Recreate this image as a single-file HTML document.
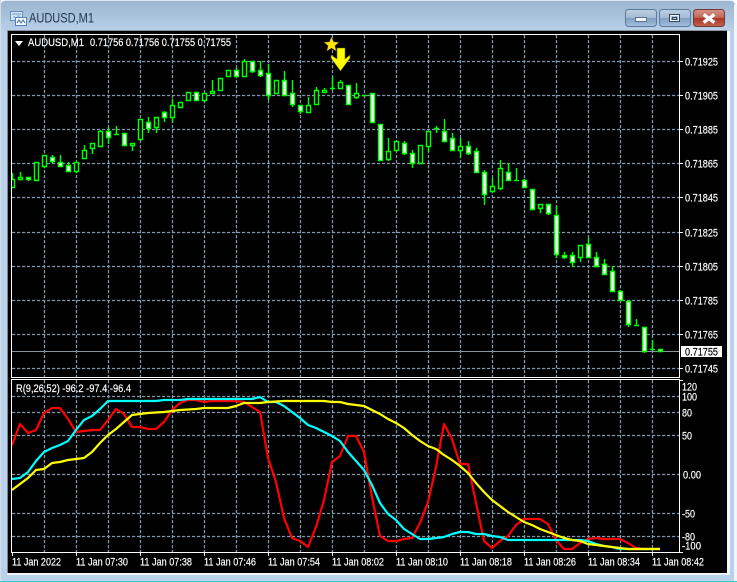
<!DOCTYPE html>
<html><head><meta charset="utf-8"><title>AUDUSD,M1</title>
<style>
html,body{margin:0;padding:0;background:#fff;width:737px;height:582px;overflow:hidden}
svg{display:block}
text{font-family:"Liberation Sans",sans-serif;font-size:11px;fill:#fff;stroke:#fff;stroke-width:.18}
.c{shape-rendering:crispEdges}
</style></head><body>
<svg width="737" height="582" viewBox="0 0 737 582" xmlns="http://www.w3.org/2000/svg">
<defs>
<linearGradient id="tb" x1="0" y1="0" x2="0" y2="1"><stop offset="0" stop-color="#9bb5d0"/><stop offset="1" stop-color="#b9d1e9"/></linearGradient>
<linearGradient id="bt" x1="0" y1="0" x2="0" y2="1"><stop offset="0" stop-color="#bccfe2"/><stop offset=".48" stop-color="#a3bcd6"/><stop offset=".52" stop-color="#7f9fc0"/><stop offset="1" stop-color="#a4c1dc"/></linearGradient>
<linearGradient id="cl" x1="0" y1="0" x2="0" y2="1"><stop offset="0" stop-color="#d4948a"/><stop offset=".48" stop-color="#c56455"/><stop offset=".52" stop-color="#a83526"/><stop offset="1" stop-color="#c4624e"/></linearGradient>
<clipPath id="mc"><rect x="12" y="35" width="667" height="342"/></clipPath>
<clipPath id="sc"><rect x="12" y="380" width="667" height="172"/></clipPath>
</defs>
<!-- window frame -->
<rect x="0.5" y="0.5" width="735" height="582" rx="5" fill="#b9d1ea"/>
<rect x="1" y="1" width="733" height="31" rx="4" fill="url(#tb)"/>
<rect x="0" y="0" width="1" height="582" fill="#d8dde3"/>
<rect x="734" y="5" width="3" height="577" fill="#f2f5f8"/>
<rect x="0" y="581" width="737" height="1" fill="#3fc6d2"/>
<rect x="7" y="30" width="720" height="1" fill="#8b949e"/>
<rect x="7" y="30" width="1" height="544" fill="#7d858e"/>
<rect x="727" y="31" width="3" height="544" fill="#f4f7fa"/>
<rect x="7" y="573" width="723" height="2" fill="#f0f2f4"/>
<rect x="8" y="31" width="719" height="542" fill="#000"/>
<!-- title icon -->
<g class="c">
<rect x="10.5" y="11.5" width="12" height="9" fill="#d7e6f5" stroke="#5f8dc0"/>
<path d="M12 14h9M13 17h2M17 16h3" stroke="#6f97c6" fill="none"/>
<rect x="15.5" y="17.5" width="11" height="8" fill="#f6fafe" stroke="#4d7fb8"/>
</g>
<path d="M17 23l2-3 2 3 2-3 2 3" stroke="#3567a8" fill="none"/>
<text x="29" y="22.5" style="font-size:14px;fill:#1f3350;stroke:none" textLength="65" lengthAdjust="spacingAndGlyphs">AUDUSD,M1</text>
<!-- buttons -->
<rect x="625.5" y="9.5" width="31" height="17" rx="3" fill="url(#bt)" stroke="#5c7a9c"/>
<rect x="659.5" y="9.5" width="31" height="17" rx="3" fill="url(#bt)" stroke="#5c7a9c"/>
<rect x="693.5" y="9.5" width="31" height="17" rx="3" fill="url(#cl)" stroke="#6f3a36"/>
<rect x="635.5" y="17.5" width="11" height="4" fill="#f2f5f8" stroke="#5a6f88" class="c"/>
<rect x="669.5" y="14.5" width="10" height="7" fill="none" stroke="#2f4560" class="c"/>
<rect x="670.5" y="15.5" width="8" height="5" fill="none" stroke="#eef3f8" class="c"/>
<rect x="672.5" y="17.5" width="4" height="2" fill="#b6c8da" stroke="#2f4560" class="c"/>
<path d="M705 15.5l8 6M713 15.5l-8 6" stroke="#fff" stroke-width="3.4" stroke-linecap="square" fill="none"/>
<!-- grids -->
<g stroke="#8496aa" stroke-width="1.25" stroke-dasharray="3.2 1.8" fill="none">
<path clip-path="url(#mc)" d="M44.5 35V377M76.5 35V377M108.5 35V377M140.5 35V377M172.5 35V377M204.5 35V377M236.5 35V377M268.5 35V377M300.5 35V377M332.5 35V377M364.5 35V377M396.5 35V377M428.5 35V377M460.5 35V377M492.5 35V377M524.5 35V377M556.5 35V377M588.5 35V377M620.5 35V377M652.5 35V377"/>
<path clip-path="url(#mc)" d="M12 61.5H679M12 95.5H679M12 129.5H679M12 163.5H679M12 197.5H679M12 232.5H679M12 266.5H679M12 300.5H679M12 334.5H679M12 368.5H679"/>
<path clip-path="url(#sc)" d="M44.5 380V552M76.5 380V552M108.5 380V552M140.5 380V552M172.5 380V552M204.5 380V552M236.5 380V552M268.5 380V552M300.5 380V552M332.5 380V552M364.5 380V552M396.5 380V552M428.5 380V552M460.5 380V552M492.5 380V552M524.5 380V552M556.5 380V552M588.5 380V552M620.5 380V552M652.5 380V552"/>
<path clip-path="url(#sc)" d="M12 396.5H679M12 412.5H679M12 435.5H679M12 474.5H679M12 513.5H679M12 536.5H679"/>
</g>
<!-- current price line -->
<rect x="12" y="351" width="667" height="1" fill="#8a949e" class="c"/>
<!-- candles -->
<g clip-path="url(#mc)" stroke-width="1.45">
<path stroke="#0f0" fill="none" d="M12.5 173V188M20.5 172V180M28.5 177V181M36.5 162V181M44.5 155V168M52.5 155V163M60.5 155V166M68.5 162V171M76.5 162V173M84.5 145V159M92.5 143V154M100.5 130V146M108.5 127V144M116.5 126V135M132.5 143V151M148.5 117V133M156.5 117V133M164.5 111V122M172.5 99V122M204.5 93V102M212.5 80V94M236.5 68V76M244.5 59V76M252.5 61V73M260.5 61V77M268.5 64V100M284.5 71V95M292.5 80V107M300.5 105V114M308.5 97V112M316.5 87V104M324.5 88V93M332.5 77V90M340.5 80V88M356.5 83V99M388.5 138V161M404.5 141V155M412.5 150V168M428.5 131V152M436.5 126V133M444.5 119V141M452.5 133V151M460.5 138V158M468.5 141V155M476.5 148V172M484.5 170V205M492.5 178V192M500.5 160V190M508.5 163V180M516.5 168V180M524.5 179V187M540.5 204V213M548.5 204V215M556.5 206V258M564.5 252V259M572.5 252V267M580.5 245V262M588.5 238V257M596.5 252V266M604.5 259V274M612.5 266V291M620.5 290V300M628.5 301V327M636.5 319V325M644.5 327V353M652.5 340V350M114 134.5h5M330 88.5h5M362 95.5h5M434 128.5h5M514 180.5h5M634 325.5h5M650 349.5h5"/>
<path stroke="#0f0" fill="#000" d="M10.5 179.5h4v8h-4zM18.5 177.5h4v2h-4zM34.5 162.5h4v18h-4zM42.5 155.5h4v11h-4zM74.5 162.5h4v9h-4zM82.5 150.5h4v8h-4zM90.5 143.5h4v5h-4zM98.5 131.5h4v15h-4zM130.5 143.5h4v2h-4zM138.5 119.5h4v20h-4zM154.5 117.5h4v10h-4zM170.5 105.5h4v12h-4zM178.5 102.5h4v5h-4zM186.5 92.5h4v8h-4zM202.5 93.5h4v7h-4zM210.5 91.5h4v2h-4zM218.5 78.5h4v12h-4zM226.5 70.5h4v6h-4zM242.5 61.5h4v15h-4zM274.5 80.5h4v13h-4zM306.5 105.5h4v7h-4zM314.5 90.5h4v14h-4zM322.5 90.5h4v2h-4zM338.5 82.5h4v6h-4zM354.5 93.5h4v4h-4zM386.5 151.5h4v8h-4zM394.5 141.5h4v9h-4zM418.5 145.5h4v18h-4zM426.5 131.5h4v15h-4zM458.5 146.5h4v4h-4zM490.5 186.5h4v5h-4zM498.5 168.5h4v20h-4zM538.5 204.5h4v4h-4zM578.5 245.5h4v12h-4z"/>
<path stroke="#0f0" fill="#fff" d="M26.5 177.5h4v2h-4zM50.5 157.5h4v4h-4zM58.5 162.5h4v4h-4zM66.5 165.5h4v6h-4zM106.5 131.5h4v6h-4zM122.5 133.5h4v12h-4zM146.5 122.5h4v6h-4zM162.5 112.5h4v5h-4zM194.5 92.5h4v8h-4zM234.5 70.5h4v6h-4zM250.5 61.5h4v10h-4zM258.5 70.5h4v5h-4zM266.5 73.5h4v22h-4zM282.5 80.5h4v15h-4zM290.5 93.5h4v11h-4zM298.5 105.5h4v6h-4zM346.5 85.5h4v19h-4zM370.5 93.5h4v29h-4zM378.5 124.5h4v36h-4zM402.5 143.5h4v10h-4zM410.5 153.5h4v10h-4zM442.5 131.5h4v10h-4zM450.5 138.5h4v12h-4zM466.5 146.5h4v7h-4zM474.5 151.5h4v21h-4zM482.5 172.5h4v22h-4zM506.5 172.5h4v8h-4zM522.5 180.5h4v7h-4zM530.5 189.5h4v20h-4zM546.5 204.5h4v9h-4zM554.5 215.5h4v39h-4zM562.5 255.5h4v2h-4zM570.5 255.5h4v7h-4zM586.5 244.5h4v13h-4zM594.5 257.5h4v9h-4zM602.5 264.5h4v10h-4zM610.5 271.5h4v20h-4zM618.5 291.5h4v9h-4zM626.5 301.5h4v23h-4zM642.5 327.5h4v24h-4zM658.5 349.5h4v2h-4z"/>
</g>
<!-- star and arrow -->
<path d="M331.5 37l2.1 4.9 5.4.4-4.1 3.4 1.3 5.3-4.7-2.9-4.7 2.9 1.3-5.3-4.1-3.4 5.4-.4z" fill="#ffe60a" stroke="#7a5a00" stroke-width=".5"/>
<path d="M337 48h8v11l5-4v3l-9.5 13-9.5-13v-3l6 4z" fill="#ffff00" stroke="#6b6b00" stroke-width=".6"/>
<!-- RSI lines -->
<g clip-path="url(#sc)" fill="none" stroke-width="2.2" stroke-linejoin="round">
<path stroke="#f00" d="M12 445L20 424 28 433 36 430 44 413 52 408 60 408 68 419 76 432 84 431 92 430 100 430 108 420 116 409 124 414 132 427 140 427 148 429 156 429 164 422 172 410 180 403 188 400 196 400 204 402 212 401 236 401 244 402 252 407 260 412 268 458 276 482 284 518 292 538 300 541 308 547 316 527 324 500 332 462 340 456 348 436 356 436 364 452 372 497 380 536 388 541 396 541 404 539 412 538 420 523 428 502 436 467 444 424 452 439 460 464 468 464 476 503 484 541 492 548 500 541 508 536 516 525 524 519 540 519 548 524 556 540 564 549 572 549 580 543 588 539 596 538 604 539 620 539 628 543 636 548 644 549 660 549"/>
<path stroke="#0ff" d="M12 479L20 478 28 472 36 461 44 452 52 448 60 445 68 441 76 430 84 420 92 416 100 409 108 401 156 401 164 400 180 400 188 399 252 399 260 397 268 402 276 402 284 406 292 412 300 418 308 425 316 428 324 432 332 436 340 441 348 452 356 461 364 470 372 485 380 503 388 514 396 520 404 529 412 534 420 539 428 539 436 538 444 537 452 534 460 532 468 532 476 534 484 534 492 536 500 537 508 540 580 540 588 541 596 544 604 546 612 547 620 549 660 549"/>
<path stroke="#ff0" d="M12 490L20 484 28 478 36 470 44 469 52 463 60 462 68 460 76 459 84 458 92 452 100 443 108 435 116 429 124 422 132 415 140 414 148 413 164 412 172 411 180 410 196 409 204 408 228 408 236 406 244 403 260 403 268 402 284 401 324 401 332 402 340 402 348 404 356 405 364 406 372 410 380 414 388 419 396 423 404 428 412 435 420 441 428 446 436 449 444 455 452 460 460 466 468 473 476 483 484 492 492 500 500 506 508 512 516 517 524 522 532 525 540 529 548 532 556 535 564 538 572 540 580 541 588 544 596 545 604 546 612 547 620 548 628 549 660 549"/>
</g>
<!-- frames -->
<g class="c" fill="none" stroke="#fff">
<path d="M11.5 34.5H679.5V377.5H11.5Z"/>
<path d="M11.5 379.5H679.5V552.5H11.5Z"/>
<path d="M680 61.5h3M680 95.5h3M680 129.5h3M680 163.5h3M680 197.5h3M680 232.5h3M680 266.5h3M680 300.5h3M680 334.5h3M680 368.5h3M680 380.5h3M680 552.5h3"/>
<path d="M12.5 553v3M76.5 553v3M140.5 553v3M204.5 553v3M268.5 553v3M332.5 553v3M396.5 553v3M460.5 553v3M524.5 553v3M588.5 553v3M652.5 553v3"/>
</g>
<!-- legend -->
<path d="M15 41h8l-4 5z" fill="#fff"/>
<text x="28" y="46" textLength="56" lengthAdjust="spacingAndGlyphs">AUDUSD,M1</text>
<text x="90" y="46" textLength="141" lengthAdjust="spacingAndGlyphs">0.71756 0.71756 0.71755 0.71755</text>
<text x="16" y="392" textLength="115" lengthAdjust="spacingAndGlyphs">R(9,26,52) -96.2 -97.4 -96.4</text>
<!-- price axis -->
<text x="685" y="65.5" textLength="33" lengthAdjust="spacingAndGlyphs">0.71925</text>
<text x="685" y="99.5" textLength="33" lengthAdjust="spacingAndGlyphs">0.71905</text>
<text x="685" y="133.5" textLength="33" lengthAdjust="spacingAndGlyphs">0.71885</text>
<text x="685" y="167.5" textLength="33" lengthAdjust="spacingAndGlyphs">0.71865</text>
<text x="685" y="201.5" textLength="33" lengthAdjust="spacingAndGlyphs">0.71845</text>
<text x="685" y="236.5" textLength="33" lengthAdjust="spacingAndGlyphs">0.71825</text>
<text x="685" y="270.5" textLength="33" lengthAdjust="spacingAndGlyphs">0.71805</text>
<text x="685" y="304.5" textLength="33" lengthAdjust="spacingAndGlyphs">0.71785</text>
<text x="685" y="338.5" textLength="33" lengthAdjust="spacingAndGlyphs">0.71765</text>
<text x="685" y="372.5" textLength="33" lengthAdjust="spacingAndGlyphs">0.71745</text>
<rect x="681" y="346" width="41" height="11" fill="#fff"/>
<text x="685" y="355.5" style="fill:#000;stroke:#000" textLength="33" lengthAdjust="spacingAndGlyphs">0.71755</text>
<!-- indicator axis -->
<text x="682" y="390.5" textLength="15" lengthAdjust="spacingAndGlyphs">120</text>
<text x="682" y="400.5" textLength="15" lengthAdjust="spacingAndGlyphs">100</text>
<text x="682" y="416.5" textLength="10" lengthAdjust="spacingAndGlyphs">80</text>
<text x="682" y="439.5" textLength="10" lengthAdjust="spacingAndGlyphs">50</text>
<text x="683" y="478.5" textLength="18" lengthAdjust="spacingAndGlyphs">0.00</text>
<text x="682" y="517.5" textLength="13" lengthAdjust="spacingAndGlyphs">-50</text>
<text x="682" y="540.5" textLength="13" lengthAdjust="spacingAndGlyphs">-80</text>
<text x="682" y="549.5" textLength="19" lengthAdjust="spacingAndGlyphs">-100</text>
<!-- time axis -->
<text x="12" y="565.5" textLength="49" lengthAdjust="spacingAndGlyphs">11 Jan 2022</text>
<text x="76" y="565.5" textLength="52" lengthAdjust="spacingAndGlyphs">11 Jan 07:30</text>
<text x="140" y="565.5" textLength="52" lengthAdjust="spacingAndGlyphs">11 Jan 07:38</text>
<text x="204" y="565.5" textLength="52" lengthAdjust="spacingAndGlyphs">11 Jan 07:46</text>
<text x="268" y="565.5" textLength="52" lengthAdjust="spacingAndGlyphs">11 Jan 07:54</text>
<text x="332" y="565.5" textLength="52" lengthAdjust="spacingAndGlyphs">11 Jan 08:02</text>
<text x="396" y="565.5" textLength="52" lengthAdjust="spacingAndGlyphs">11 Jan 08:10</text>
<text x="460" y="565.5" textLength="52" lengthAdjust="spacingAndGlyphs">11 Jan 08:18</text>
<text x="524" y="565.5" textLength="52" lengthAdjust="spacingAndGlyphs">11 Jan 08:26</text>
<text x="588" y="565.5" textLength="52" lengthAdjust="spacingAndGlyphs">11 Jan 08:34</text>
<text x="652" y="565.5" textLength="52" lengthAdjust="spacingAndGlyphs">11 Jan 08:42</text>
</svg>
</body></html>
